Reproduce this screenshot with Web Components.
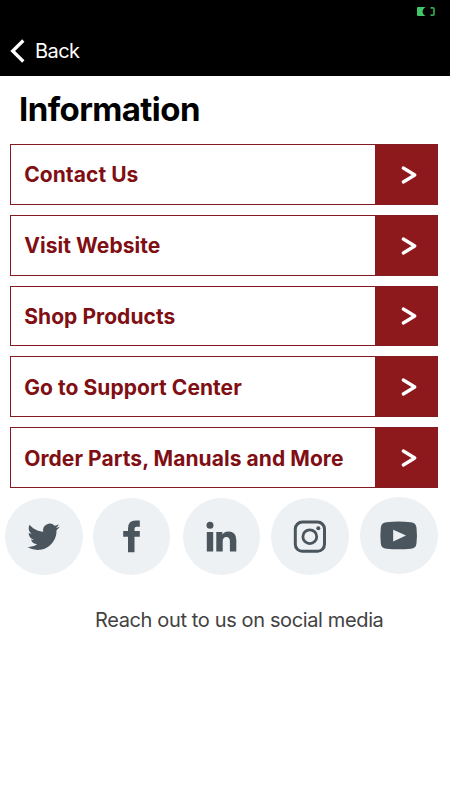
<!DOCTYPE html>
<html lang="en"><head><meta charset="utf-8"><title>Information</title>
<style>html,body{margin:0;background:#fff;font-family:Inter,"Liberation Sans",sans-serif}</style></head>
<body><info-page></info-page>
<script>
function define(name, html) {
  const t = document.createElement('template');
  t.innerHTML = html;
  customElements.define(name, class extends HTMLElement {
    constructor() {
      super();
      this.attachShadow({mode: 'open'}).append(t.content.cloneNode(true));
    }
  });
}
define('nav-bar', `<style>
:host{display:flex;flex-direction:column;height:76.4px;background:#000;color:#fff}
.status{display:flex;justify-content:flex-end;height:25px;padding:7px 15px 0 0;box-sizing:border-box}
.nav{display:flex;align-items:center;height:51px;padding-left:10px;font-size:20px;letter-spacing:-.55px;gap:10px}
svg{display:block}.status svg{width:18px;height:9px}.nav svg{width:15px;height:24px}
</style><div class="status"><svg viewBox="0 0 18 9"><path d="M1 0h7.5Q5.5 2 5.5 4.5T8.300 9H1Q0 9 0 8V1Q0 0 1 0Z" fill="#41c668"/><path d="M13.500 .8h2.200q1.300 0 1.300 1.300v4.800q0 1.300-1.300 1.300h-2.200" fill="none" stroke="#32a552" stroke-width="1.700"/></svg></div>
<div class="nav"><svg viewBox="0 0 15 24"><path d="M13.300 1.500 2.700 12l10.600 10.500" fill="none" stroke="#fff" stroke-width="3.300"/></svg><span><slot></slot></span></div>`);
define('link-row', `<style>
:host{display:flex;box-sizing:border-box;height:60.800px;border:1px solid #821c22;background:#fff;color:#7f0f14}
.label{flex:1;display:flex;align-items:center;padding:1px 0 0 13.200px;font-size:21px;font-weight:700;white-space:nowrap;letter-spacing:.06px}
.go{width:62.500px;background:#8e191d;display:flex;align-items:center;justify-content:center}
svg{display:block;width:20px;height:22px;margin:1px 0 0 6px}
</style><div class="label"><span><slot></slot></span></div><div class="go"><svg viewBox="0 0 20 22"><path d="M4.300 4 15.800 11 4.300 18" fill="none" stroke="#fff" stroke-width="3.300" stroke-linecap="round" stroke-linejoin="round"/></svg></div>`);
define('social-button', `<style>
:host{display:block;box-sizing:border-box;width:77.500px;height:77.500px;border-radius:50%;background:#edf1f4;color:#4a555d}
::slotted(svg){display:block;width:77.500px;height:77.500px}
</style><slot></slot>`);
define('info-page', `<style>
:host{display:block;height:800px;overflow:hidden;background:#fff}
h1{margin:0;padding:15px 0 0 19px;font-size:33px;line-height:36px;font-weight:700;letter-spacing:-.58px;color:#000}
.list{display:flex;flex-direction:column;gap:10px;padding:16.600px 12px 0 10px}
.social{display:flex;padding:10px 0 0 5.200px}
social-button+social-button{margin-left:10.200px}
.social social-button:nth-child(3){margin-left:12.300px}.social social-button:nth-child(4){margin-left:11.200px}
.social social-button:nth-child(5){margin:-1px 0 0 11.300px}
p{margin:33px 0 0 95px;font-size:20px;line-height:24px;color:#424242;white-space:nowrap;letter-spacing:-.37px}
</style>
<nav-bar>Back</nav-bar><h1>Information</h1>
<div class="list"><link-row>Contact Us</link-row><link-row>Visit Website</link-row><link-row>Shop Products</link-row><link-row>Go to Support Center</link-row><link-row>Order Parts, Manuals and More</link-row></div>
<div class="social">
<social-button><svg viewBox="0 0 77.500 77.500" fill="currentColor"><path transform="translate(22.400 22.600) scale(1.350)" d="M23.953 4.570a10 10 0 01-2.825.775 4.958 4.958 0 002.163-2.723c-.951.555-2.005.959-3.127 1.184a4.920 4.920 0 00-8.384 4.482C7.690 8.095 4.067 6.130 1.640 3.162a4.822 4.822 0 00-.666 2.475c0 1.710.870 3.213 2.188 4.096a4.904 4.904 0 01-2.228-.616v.060a4.923 4.923 0 003.946 4.827 4.996 4.996 0 01-2.212.085 4.936 4.936 0 004.604 3.417 9.867 9.867 0 01-6.102 2.105c-.390 0-.779-.023-1.170-.067a13.995 13.995 0 007.557 2.209c9.053 0 13.998-7.496 13.998-13.985 0-.210 0-.420-.015-.630A9.935 9.935 0 0024 4.590z"/></svg></social-button>
<social-button><svg viewBox="0 0 77.500 77.500" fill="currentColor"><path d="M35 54.300V38.800H30.200V33H35V30.500Q35 22.500 42.500 22.500H46.800V28.700H43.600Q41.500 28.700 41.500 31V33H46.800V38.800H41.500V54.300Z"/></svg></social-button>
<social-button><svg viewBox="0 0 77.500 77.500" fill="currentColor"><circle cx="27" cy="27.200" r="3.500"/><path d="M23.800 34H30.200V53.500H23.800ZM33.300 34H39.400V36.600Q41.400 33.500 45.400 33.500Q53.300 33.500 53.300 42V53.500H46.900V43.500Q46.900 39 43.400 39Q39.700 39 39.700 43.500V53.500H33.300Z"/></svg></social-button>
<social-button><svg viewBox="0 0 77.500 77.500" fill="none" stroke="currentColor"><rect x="24.300" y="24.100" width="29.200" height="29.200" rx="7" stroke-width="3"/><circle cx="38.800" cy="38.700" r="6.900" stroke-width="2.800"/><circle cx="47.300" cy="30.300" r="2" fill="currentColor" stroke="none"/></svg></social-button>
<social-button><svg viewBox="0 0 77.500 77.500"><path d="M26.500 25.200Q38.500 24 50.800 25.200Q56 25.400 56.500 30.700Q57.400 38.700 56.500 46.200Q56 51.500 50.800 51.700Q38.500 52.700 26.500 51.700Q21.200 51.500 20.800 46.200Q20 38.700 20.800 30.700Q21.200 25.400 26.500 25.200Z" fill="currentColor"/><path d="M33.200 32.700 46 38.500 33.200 44.400Z" fill="#edf1f4"/></svg></social-button>
</div><p>Reach out to us on social media</p>`);
</script></body></html>
